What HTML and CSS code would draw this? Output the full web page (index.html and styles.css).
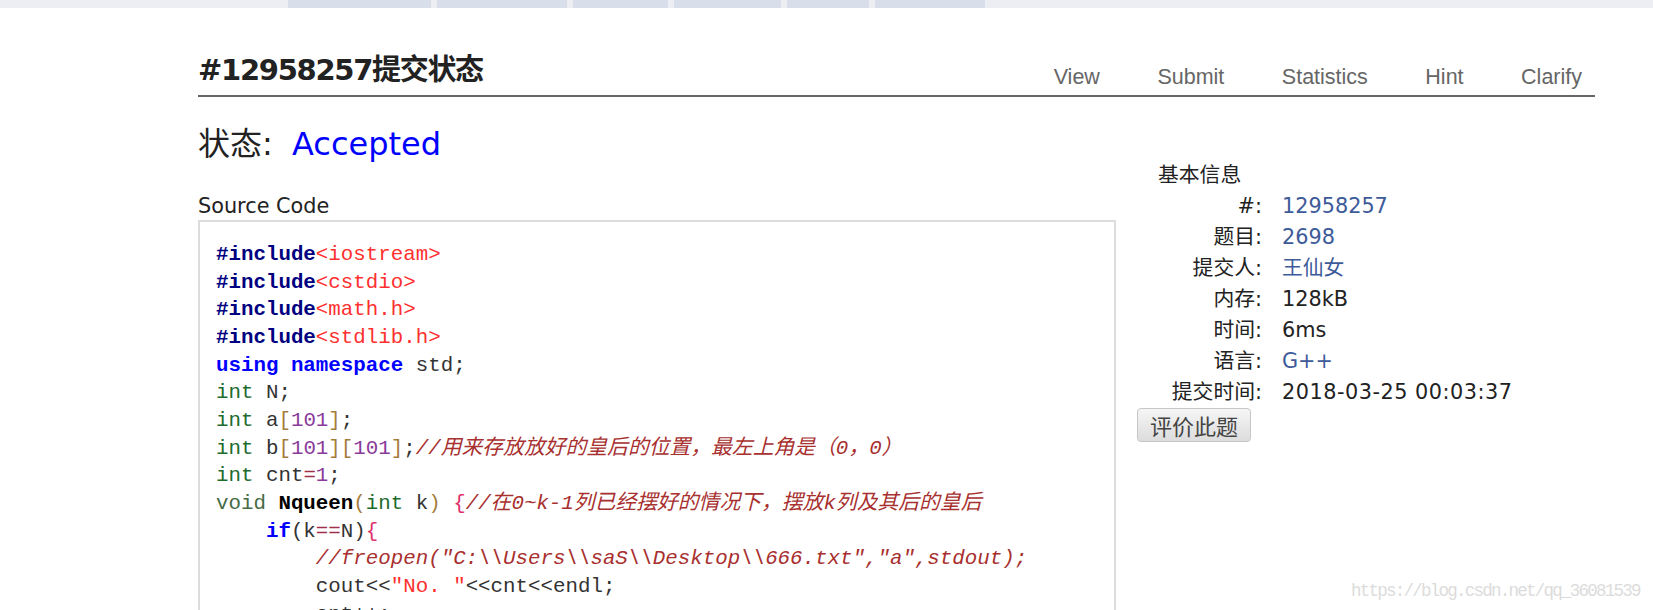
FILE: index.html
```html
<!DOCTYPE html>
<html lang="zh-CN">
<head>
  <meta charset="UTF-8">
  <meta name="viewport" content="width=device-width, initial-scale=1.0">
  <title>#12958257提交状态</title>
  <link rel="stylesheet" href="styles.css">
</head>
<body>

  <div class="top-bar">
    <span></span>
    <span></span>
    <span></span>
    <span></span>
    <span></span>
    <span></span>
  </div>

  <div class="page">
    <div class="page-header">
      <h1>#12958257提交状态</h1>
      <ul class="page-nav">
        <li><a href="#">View</a></li>
        <li><a href="#">Submit</a></li>
        <li><a href="#">Statistics</a></li>
        <li><a href="#">Hint</a></li>
        <li><a href="#">Clarify</a></li>
      </ul>
    </div>

    <div class="page-body">
      <div class="main-col">
        <h2 class="status">状态: <a href="#" class="accepted">Accepted</a></h2>
        <h3 class="source-title">Source Code</h3>
<pre class="source"><span class="pp">#include</span><span class="hd">&lt;iostream&gt;</span>
<span class="pp">#include</span><span class="hd">&lt;cstdio&gt;</span>
<span class="pp">#include</span><span class="hd">&lt;math.h&gt;</span>
<span class="pp">#include</span><span class="hd">&lt;stdlib.h&gt;</span>
<span class="kw">using</span> <span class="kw">namespace</span> std;
<span class="ty">int</span> N;
<span class="ty">int</span> a<span class="br">[</span><span class="nm">101</span><span class="br">]</span>;
<span class="ty">int</span> b<span class="br">[</span><span class="nm">101</span><span class="br">][</span><span class="nm">101</span><span class="br">]</span>;<span class="cm">//用来存放放好的皇后的位置，最左上角是（0，0）</span>
<span class="ty">int</span> cnt<span class="op">=</span><span class="nm">1</span>;
<span class="vd">void</span> <span class="fn">Nqueen</span><span class="br">(</span><span class="ty">int</span> k<span class="br">)</span> <span class="pu">{</span><span class="cm">//在0~k-1列已经摆好的情况下，摆放k列及其后的皇后</span>
    <span class="kw">if</span>(k<span class="op">==</span>N)<span class="pu">{</span>
        <span class="cm">//freopen("C:\\Users\\saS\\Desktop\\666.txt","a",stdout);</span>
        cout&lt;&lt;<span class="st">"No. "</span>&lt;&lt;cnt&lt;&lt;endl;
        cnt++;</pre>
      </div>

      <div class="side-col">
        <h3>基本信息</h3>
        <dl class="info">
          <dt>#:</dt><dd><a href="#">12958257</a></dd>
          <dt>题目:</dt><dd><a href="#">2698</a></dd>
          <dt>提交人:</dt><dd><a href="#">王仙女</a></dd>
          <dt>内存:</dt><dd>128kB</dd>
          <dt>时间:</dt><dd>6ms</dd>
          <dt>语言:</dt><dd><a href="#">G++</a></dd>
          <dt>提交时间:</dt><dd class="time">2018-03-25 00:03:37</dd>
        </dl>
        <button class="rate-btn">评价此题</button>
      </div>
    </div>
  </div>

  <div class="watermark">https://blog.csdn.net/qq_36081539</div>

</body>
</html>
```

FILE: styles.css
```css
* {
  margin: 0;
  padding: 0;
  box-sizing: border-box;
}

html,
body {
  overflow: hidden;
}

body {
  background-color: #fff;
  color: #222;
  font-family: "DejaVu Sans", "Noto Sans CJK SC", sans-serif;
  font-size: 20.8px;
}

/* strip of the site menu cut off at the top */
.top-bar {
  height: 8px;
  background-color: #eceef3;
  display: flex;
  gap: 6px;
  padding-left: 288px;
}

.top-bar span {
  background-color: #d8dfea;
}

.top-bar span:nth-child(1) { width: 143px; }
.top-bar span:nth-child(2) { width: 130px; }
.top-bar span:nth-child(3) { width: 95px; }
.top-bar span:nth-child(4) { width: 107px; }
.top-bar span:nth-child(5) { width: 82px; }
.top-bar span:nth-child(6) { width: 110px; }

.page {
  width: 1397px;
  margin-left: 198px;
}

.page-header {
  display: flex;
  justify-content: space-between;
  align-items: flex-end;
  margin-top: 47.5px;
  border-bottom: 2px solid #666;
}

.page-header h1 {
  font-size: 29px;
  line-height: 29px;
  letter-spacing: -1.3px;
  font-weight: bold;
  color: #222;
  margin-bottom: 10.5px;
}

.page-nav {
  list-style: none;
  display: flex;
  gap: 57.5px;
  padding-right: 13px;
  margin-bottom: 6.7px;
  font-family: "Liberation Sans", "Noto Sans CJK SC", sans-serif;
  font-size: 21.5px;
  line-height: 21.5px;
}

.page-nav a {
  color: #666;
  text-decoration: none;
}

.page-body {
  display: flex;
  gap: 21px;
}

.main-col {
  flex: none;
  width: 918px;
}

.status {
  font-size: 32px;
  line-height: 38.4px;
  font-weight: normal;
  margin-top: 27.7px;
}

.status .accepted {
  color: #0000ff;
  text-decoration: none;
  margin-left: 9px;
}

.source-title {
  font-size: 20.8px;
  line-height: 27.2px;
  font-weight: normal;
  margin-top: 30.2px;
}

.source {
  height: 600px;
  border: 2px solid #dcdcdc;
  padding: 18.5px 16px;
  font-family: "Liberation Mono", "Noto Sans CJK SC", monospace;
  font-size: 20.8px;
  line-height: 27.65px;
  color: #333;
  white-space: pre;
}

/* code colours */
.pp { color: #000080; font-weight: bold; }
.hd { color: #ff3030; }
.kw { color: #0000ff; font-weight: bold; }
.ty { color: #1d6b2d; }
.vd { color: #456b45; }
.nm { color: #8a3a9a; }
.br { color: #a67c3d; }
.op { color: #a0304a; }
.pu { color: #e0306a; }
.fn { color: #000; font-weight: bold; }
.st { color: #ff3030; }
.cm { color: #a8302f; font-style: italic; }

/* right column */
.side-col {
  padding-top: 62.5px;
}

.side-col h3 {
  font-size: 20.8px;
  line-height: 31px;
  font-weight: normal;
  padding-left: 21px;
}

.info {
  display: grid;
  grid-template-columns: 125px auto;
  column-gap: 20px;
  line-height: 31px;
}

.info dt {
  text-align: right;
}

.info .time {
  letter-spacing: 0.5px;
}

.info a {
  color: #3d5a99;
  text-decoration: none;
}

.rate-btn {
  margin-top: 0.5px;
  height: 34px;
  padding: 0 12px;
  font-family: "Noto Sans CJK SC", sans-serif;
  font-size: 22px;
  line-height: 32px;
  color: #444;
  background: linear-gradient(#f6f6f6, #dcdcdc);
  border: 1px solid #c6c6c6;
  border-radius: 4px;
}

.watermark {
  position: absolute;
  left: 1351px;
  top: 581px;
  font-family: "Liberation Mono", monospace;
  font-size: 17.5px;
  letter-spacing: -1.75px;
  color: #dcdcdc;
}
```
